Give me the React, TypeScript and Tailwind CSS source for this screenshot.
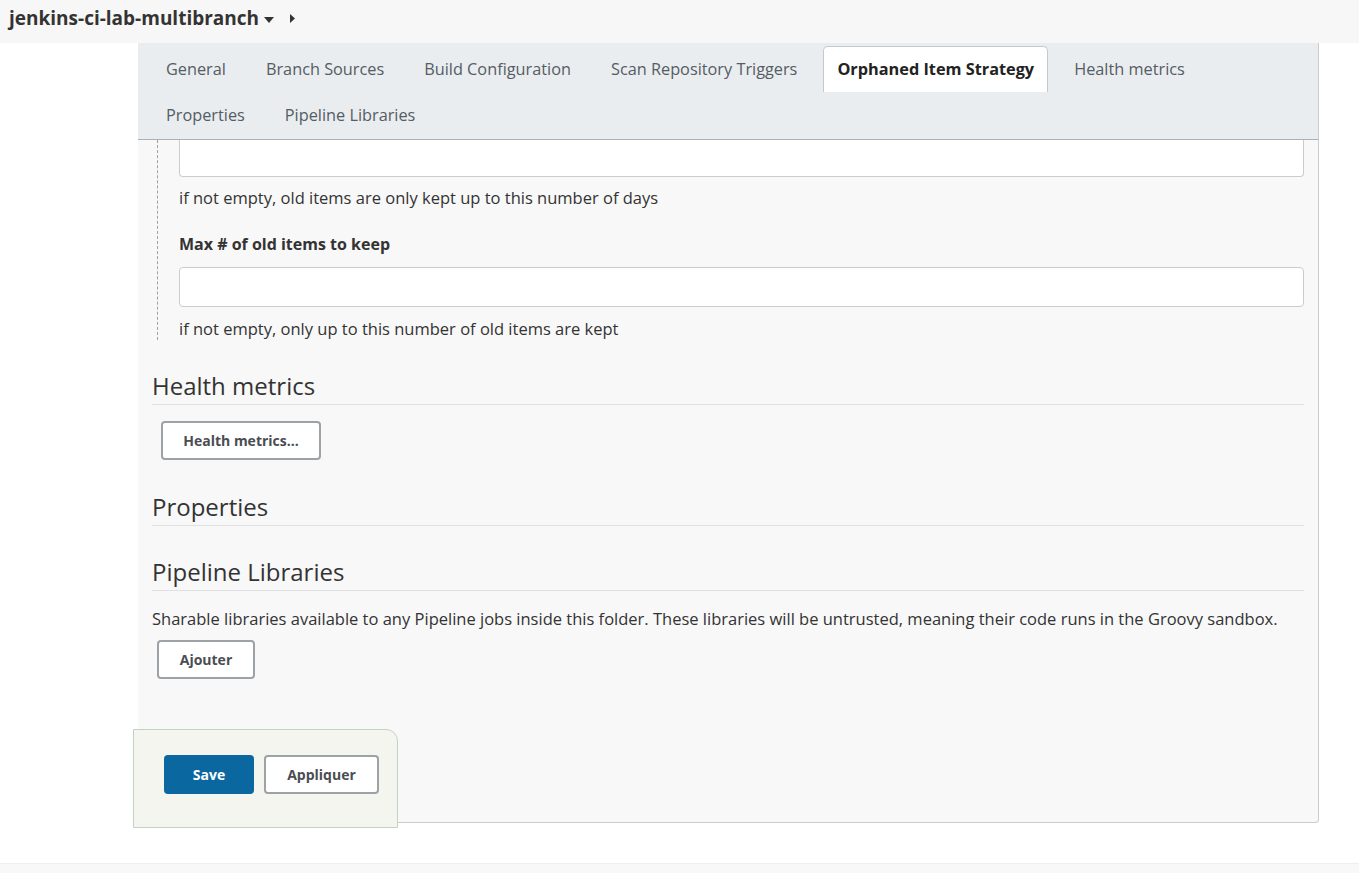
import React from "react";

const tabsRow1 = [
  "General",
  "Branch Sources",
  "Build Configuration",
  "Scan Repository Triggers",
  "Orphaned Item Strategy",
  "Health metrics",
];
const tabsRow2 = ["Properties", "Pipeline Libraries"];

function Tab({ label }: { label: string }) {
  const active = label === "Orphaned Item Strategy";
  return (
    <div
      className={
        active
          ? "h-[46px] px-[13px] flex items-center bg-white border border-b-0 border-[#c3c9ce] rounded-t-[5px] font-bold text-[#222]"
          : "h-[46px] px-[14px] flex items-center text-[#555c63]"
      }
    >
      {label}
    </div>
  );
}

function Section({ title }: { title: string }) {
  return (
    <h2 className="text-[24px] leading-[30px] text-[#333] pb-[3px] border-b border-[#dfe1e3]">
      {title}
    </h2>
  );
}

function Btn({ children, className }: { children: React.ReactNode; className?: string }) {
  return (
    <button
      className={
        "h-[39px] rounded-[4px] border-2 border-[#9da2a6] bg-white text-[14px] font-bold text-[#4a4d52] " +
        (className ?? "")
      }
    >
      {children}
    </button>
  );
}

export default function App() {
  return (
    <div
      className="w-[1359px] h-[873px] overflow-hidden bg-white text-[16.5px] text-[#333]"
      style={{ fontFamily: '"Segoe UI", "Open Sans", sans-serif' }}
    >
      {/* breadcrumb bar */}
      <div className="h-[43px] bg-[#f7f7f7] flex items-center pl-[9px] pb-[6px]">
        <span className="text-[19px] font-bold text-[#333]">jenkins-ci-lab-multibranch</span>
        <svg width="10" height="6" viewBox="0 0 10 6" className="ml-[5px] mt-[2px]">
          <path d="M0 0h10L5 6z" fill="#333" />
        </svg>
        <svg width="5" height="9" viewBox="0 0 5 9" className="ml-[16px]">
          <path d="M0 0l5 4.5L0 9z" fill="#333" />
        </svg>
      </div>

      <div className="pl-[138px]">
        <div className="w-[1181px] bg-[#f8f8f8] border-r border-b border-[#ccc] rounded-br-[4px] h-[780px]">
          {/* tabs */}
          <div className="bg-[#e9edf0] border-b border-[#a9b1b8] pl-[14px] pt-[3px] h-[97px]">
            <div className="flex gap-[12px] text-[16.3px]">
              {tabsRow1.map((t) => (
                <Tab key={t} label={t} />
              ))}
            </div>
            <div className="flex gap-[12px] text-[16.3px]">
              {tabsRow2.map((t) => (
                <Tab key={t} label={t} />
              ))}
            </div>
          </div>

          <div className="px-[14px]">
            {/* orphaned item strategy tail */}
            <div className="ml-[5px] border-l border-dashed border-[#a0a0a0] pl-[21px] h-[200px]">
              <div className="h-[37px] bg-white border-x border-b border-[#ccc] rounded-b-[4px]" />
              <div className="mt-[9px] leading-[24px]">
                if not empty, old items are only kept up to this number of days
              </div>
              <div className="mt-[22px] leading-[24px] font-bold text-[16px]">Max # of old items to keep</div>
              <div className="mt-[11px] h-[40px] bg-white border border-[#ccc] rounded-[4px]" />
              <div className="mt-[10px] leading-[24px]">
                if not empty, only up to this number of old items are kept
              </div>
            </div>

            <div className="mt-[31px]">
              <Section title="Health metrics" />
              <Btn className="mt-[16px] ml-[9px] w-[160px]">Health metrics...</Btn>
            </div>

            <div className="mt-[32px]">
              <Section title="Properties" />
            </div>

            <div className="mt-[31px]">
              <Section title="Pipeline Libraries" />
              <div className="mt-[16px] leading-[24px]">
                Sharable libraries available to any Pipeline jobs inside this folder. These libraries will be
                untrusted, meaning their code runs in the Groovy sandbox.
              </div>
              <Btn className="mt-[9px] ml-[5px] w-[98px]">Ajouter</Btn>
            </div>
          </div>
        </div>

        {/* sticky save bar */}
        <div className="relative -mt-[94px] -ml-[5px] w-[265px] h-[99px] bg-[#f4f5ef] border border-[#c3d3c3] rounded-tr-[12px] flex items-center gap-[10px] pl-[30px] pb-[8px]">
          <button className="h-[39px] w-[90px] rounded-[4px] bg-[#0b67a0] text-white text-[14px] font-bold">
            Save
          </button>
          <Btn className="w-[115px]">Appliquer</Btn>
        </div>
      </div>

      {/* footer */}
      <div className="mt-[35px] h-[20px] bg-[#f8f8f8] border-t border-[#eee]" />
    </div>
  );
}
